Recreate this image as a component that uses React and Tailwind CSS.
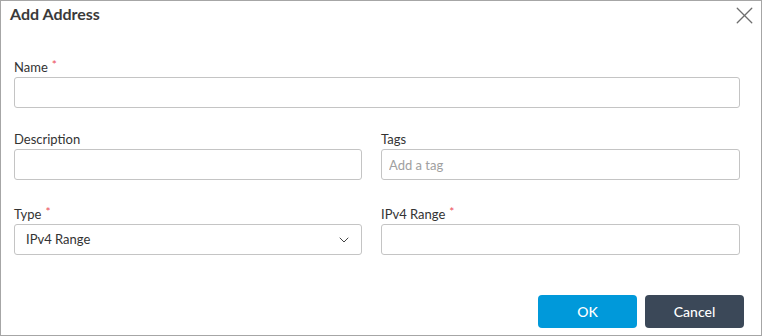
import { X, ChevronDown } from 'lucide-react'

function Label({ children, required }) {
  return (
    <div className="h-[18px] text-[13px] leading-[16px] text-[#333]">
      {children}
      {required && <span className="ml-[4px] text-[12px] leading-[12px] align-top text-[#ec4d5a]">*</span>}
    </div>
  )
}

const inputCls =
  'block h-[31px] w-full rounded-[3px] border border-[#c4c4c4] bg-white text-[13px] text-[#333] outline-none'

export default function App() {
  return (
    <div className="flex h-[336px] w-[762px] flex-col border border-[#a6a6a6] bg-white font-['Lato','Liberation_Sans',sans-serif]">
      <div className="flex h-[30px] items-start justify-between pl-[9px] pr-[2px]">
        <h2 className="mt-[3px] text-[16px] font-bold leading-[20px] text-[#3a3a3a]">Add Address</h2>
        <button aria-label="Close" className="h-[29px] w-[29px] text-[#6e6e6e]">
          <X size={29} strokeWidth={1.1} className="block" />
        </button>
      </div>

      <div className="w-[739px] pl-[13px]">
        <div className="mt-[28px]">
          <Label required>Name</Label>
          <input className={inputCls + ' px-[11px]'} />
        </div>

        <div className="mt-[23px] grid grid-cols-[348px_359px] gap-x-[19px]">
          <div>
            <Label>Description</Label>
            <input className={inputCls + ' px-[11px]'} />
          </div>
          <div>
            <Label>Tags</Label>
            <input className={inputCls + ' px-[7px] placeholder:text-[#a0a0a0]'} placeholder="Add a tag" />
          </div>
        </div>

        <div className="mt-[26px] grid grid-cols-[348px_359px] gap-x-[19px]">
          <div>
            <Label required>Type</Label>
            <div className={inputCls + ' flex items-center justify-between pl-[11px] pr-[9px]'}>
              <span>IPv4 Range</span>
              <ChevronDown size={16} strokeWidth={1.5} className="text-[#444]" />
            </div>
          </div>
          <div>
            <Label required>IPv4 Range</Label>
            <input className={inputCls + ' px-[11px]'} />
          </div>
        </div>
      </div>

      <div className="mt-[40px] flex justify-end gap-[8px] pr-[17px]">
        <button className="h-[33px] w-[99px] rounded-[4px] bg-[#0099da] text-[14px] font-medium text-white">OK</button>
        <button className="h-[33px] w-[99px] rounded-[4px] bg-[#3b4858] text-[14px] font-medium text-white">Cancel</button>
      </div>
    </div>
  )
}
